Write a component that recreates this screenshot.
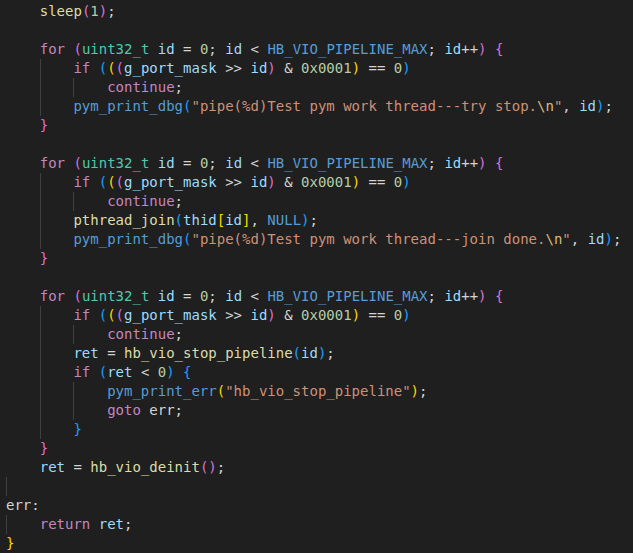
const K = 'text-[#C586C0]';
const T = 'text-[#4EC9B0]';
const V = 'text-[#9CDCFE]';
const F = 'text-[#DCDCAA]';
const M = 'text-[#569CD6]';
const N = 'text-[#B5CEA8]';
const S = 'text-[#CE9178]';
const E = 'text-[#D7BA7D]';
const P = 'text-[#D4D4D4]';
const B1 = 'text-[#FFD700]';
const B2 = 'text-[#DA70D6]';
const B3 = 'text-[#179FFF]';

type Tok = [string, string];
type Line = { toks: Tok[]; guides?: number[] };

const forLine = (): Tok[] => [
  ['    ', P], ['for', K], [' ', P], ['(', B2], ['uint32_t', T], [' ', P], ['id', V], [' = ', P], ['0', N], ['; ', P],
  ['id', V], [' < ', P], ['HB_VIO_PIPELINE_MAX', M], ['; ', P], ['id', V], ['++', P], [')', B2], [' ', P], ['{', B2],
];

const ifLine = (): Tok[] => [
  ['        ', P], ['if', K], [' ', P], ['(', B3], ['(', B1], ['(', B2], ['g_port_mask', V], [' >> ', P], ['id', V], [')', B2],
  [' & ', P], ['0x0001', N], [')', B1], [' == ', P], ['0', N], [')', B3],
];

const contLine = (): Tok[] => [['            ', P], ['continue', K], [';', P]];

const dbg = (msg: string): Tok[] => [
  ['        ', P], ['pym_print_dbg', M], ['(', B3], ['"pipe(%d)Test pym work thread---' + msg, S], ['\\n', E], ['"', S],
  [', ', P], ['id', V], [')', B3], [';', P],
];

const lines: Line[] = [
  { toks: [['    ', P], ['sleep', F], ['(', B2], ['1', N], [')', B2], [';', P]] },
  { toks: [] },
  { toks: forLine() },
  { toks: ifLine(), guides: [1] },
  { toks: contLine(), guides: [1, 2] },
  { toks: dbg('try stop.'), guides: [1] },
  { toks: [['    ', P], ['}', B2]] },
  { toks: [] },
  { toks: forLine() },
  { toks: ifLine(), guides: [1] },
  { toks: contLine(), guides: [1, 2] },
  {
    toks: [['        ', P], ['pthread_join', F], ['(', B3], ['thid', V], ['[', B1], ['id', V], [']', B1], [', ', P], ['NULL', M], [')', B3], [';', P]],
    guides: [1],
  },
  { toks: dbg('join done.'), guides: [1] },
  { toks: [['    ', P], ['}', B2]] },
  { toks: [] },
  { toks: forLine() },
  { toks: ifLine(), guides: [1] },
  { toks: contLine(), guides: [1, 2] },
  {
    toks: [['        ', P], ['ret', V], [' = ', P], ['hb_vio_stop_pipeline', F], ['(', B3], ['id', V], [')', B3], [';', P]],
    guides: [1],
  },
  {
    toks: [['        ', P], ['if', K], [' ', P], ['(', B3], ['ret', V], [' < ', P], ['0', N], [')', B3], [' ', P], ['{', B3]],
    guides: [1],
  },
  {
    toks: [['            ', P], ['pym_print_err', M], ['(', B1], ['"hb_vio_stop_pipeline"', S], [')', B1], [';', P]],
    guides: [1, 2],
  },
  { toks: [['            ', P], ['goto', K], [' ', P], ['err', P], [';', P]], guides: [1, 2] },
  { toks: [['        ', P], ['}', B3]], guides: [1] },
  { toks: [['    ', P], ['}', B2]] },
  { toks: [['    ', P], ['ret', V], [' = ', P], ['hb_vio_deinit', F], ['(', B2], [')', B2], [';', P]] },
  { toks: [], guides: [0] },
  { toks: [['err', P], [':', P]] },
  { toks: [['    ', P], ['return', K], [' ', P], ['ret', V], [';', P]], guides: [0] },
  { toks: [['}', B1]] },
];

const guideLeft = ['left-0', 'left-[33.7px]', 'left-[67.4px]'];

function CodeLine({ line }: { line: Line }) {
  return (
    <div className="relative h-[19px] whitespace-pre">
      {(line.guides || []).map(g => (
        <span key={g} className={`absolute top-0 h-[19px] w-px bg-[#404040] ${guideLeft[g]}`} />
      ))}
      {line.toks.map(([t, c], i) => (
        <span key={i} className={c}>{t}</span>
      ))}
    </div>
  );
}

export default function App() {
  return (
    <div className="w-[633px] h-[553px] overflow-hidden bg-[#1f1f1f] pt-[2px] pl-[6px] font-['DejaVu_Sans_Mono',monospace] text-[14px] leading-[19px]">
      {lines.map((l, i) => (
        <CodeLine key={i} line={l} />
      ))}
    </div>
  );
}
